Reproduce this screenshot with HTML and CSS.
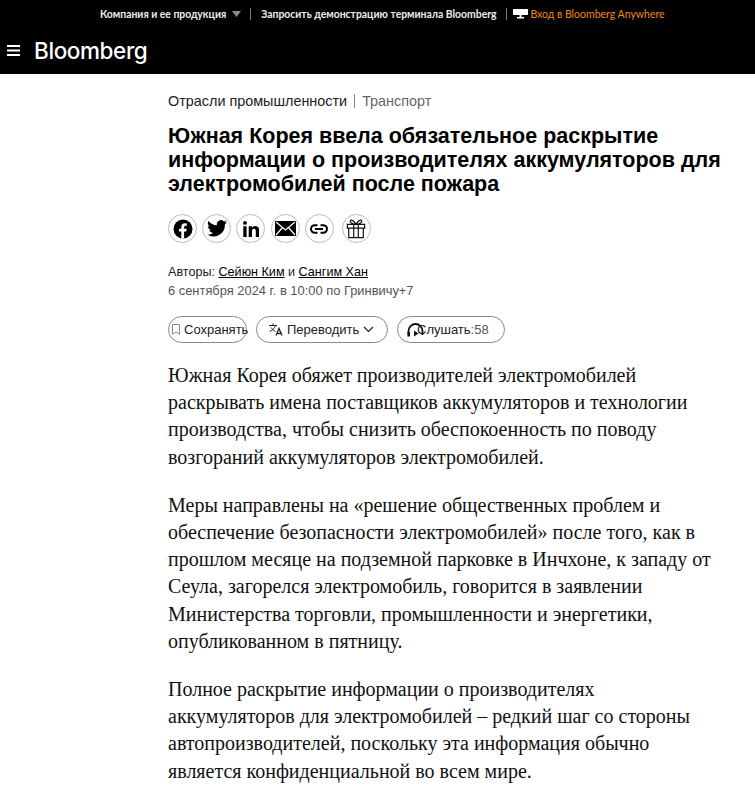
FILE: index.html
```html
<!DOCTYPE html>
<html lang="ru">
<head>
<meta charset="utf-8">
<title>Bloomberg</title>
<link rel="stylesheet" href="styles.css">
</head>
<body>
<header class="site-header">
  <div class="topbar">
    <span class="top-link">Компания и ее продукция</span>
    <svg class="caret" width="9" height="6" viewBox="0 0 9 6"><path d="M0 0h9L4.500 6z" fill="#8a8a8a"/></svg>
    <span class="sep sep-a"></span>
    <span class="top-link">Запросить демонстрацию терминала Bloomberg</span>
    <span class="sep sep-b"></span>
    <svg class="monitor" width="15" height="10" viewBox="0 0 15 10"><path d="M0 0h15v6H0z" fill="#fff"/><path d="M6.500 6h2v2h-2zM4 8h7v1.500H4z" fill="#fff"/></svg>
    <span class="top-link orange">Вход в Bloomberg Anywhere</span>
  </div>
  <div class="brandbar">
    <svg class="burger" width="13" height="11" viewBox="0 0 13 11"><path d="M0 0h13v2H0zM0 4.500h13v2H0zM0 9h13v2H0z" fill="#fff"/></svg>
    <span class="logo">Bloomberg</span>
  </div>
</header>
<main class="article">
  <div class="crumbs"><span>Отрасли промышленности</span><span class="bar"></span><span class="crumb-muted">Транспорт</span></div>
  <h1 class="headline">Южная Корея ввела обязательное раскрытие информации о производителях аккумуляторов для электромобилей после пожара</h1>
  <div class="share">
    <span class="share-btn"><svg width="20" height="20" viewBox="0 0 20 20"><circle cx="10" cy="10" r="9.500" fill="#000"/><path d="M8.300 19.500v-7H6v-2.700h2.300V7.800c0-2.300 1.400-3.600 3.500-3.600l2 .2v2.300h-1.200c-1.100 0-1.500.7-1.500 1.400v1.700h2.600l-.4 2.700h-2.200v7z" fill="#fff"/></svg></span>
    <span class="share-btn"><svg width="20" height="17" viewBox="0 0 24 20"><path d="M24 2.400c-.9.400-1.800.7-2.800.8 1-.6 1.800-1.600 2.200-2.700-1 .6-2 1-3.100 1.200A4.900 4.900 0 0 0 11.900 6.200C7.800 6 4.200 4 1.700.9c-1.300 2.200-.7 5.100 1.500 6.600-.8 0-1.600-.2-2.200-.6 0 2.300 1.600 4.400 3.900 4.900-.7.200-1.500.2-2.200.1.600 2 2.400 3.400 4.600 3.400A9.900 9.900 0 0 1 0 17.300 13.900 13.900 0 0 0 21.500 5c1-.7 1.900-1.600 2.500-2.600z" fill="#000"/></svg></span>
    <span class="share-btn"><svg width="16" height="16" viewBox="0 0 16 16"><path d="M.3 5.200h3.300V16H.3zM2 0a1.900 1.900 0 1 1 0 3.800A1.900 1.900 0 0 1 2 0zM5.700 5.200h3.200v1.500c.5-.9 1.600-1.800 3.200-1.800 3.400 0 4 2.200 4 5.100V16h-3.300v-5.300c0-1.300 0-2.900-1.800-2.900s-2 1.400-2 2.800V16H5.700z" fill="#000"/></svg></span>
    <span class="share-btn"><svg width="21" height="15" viewBox="0 0 21 15"><path d="M0 0h21v15H0z" fill="#000"/><path d="M1 1l9.500 8L20 1M1 14l6.500-7.500M20 14l-6.500-7.500" fill="none" stroke="#fff" stroke-width="1.200"/></svg></span>
    <span class="share-btn"><svg width="18" height="10" viewBox="0 0 18 10"><path d="M7.500 1.200H4.800a3.800 3.800 0 0 0 0 7.600h2.700M10.500 1.200h2.700a3.800 3.800 0 0 1 0 7.600h-2.700M5 5h8" fill="none" stroke="#000" stroke-width="2"/></svg></span>
    <span class="share-btn share-gift"><svg width="20" height="21" viewBox="0 0 22 22"><path d="M1.500 6.500h19v4h-19zM3 10.500h16V21H3zM8.500 6.500V21M13.500 6.500V21M11 6.500C9 3 6 .5 4.800 2.300 3.700 4 7 6.500 11 6.500c4 0 7.300-2.500 6.200-4.200C16 .5 13 3 11 6.500z" fill="none" stroke="#111" stroke-width="1.300"/></svg></span>
  </div>
  <div class="byline">Авторы: <a class="author">Сейюн Ким</a> и <a class="author">Сангим Хан</a></div>
  <div class="dateline">6 сентября 2024 г. в 10:00 по Гринвичу+7</div>
  <div class="actions">
    <span class="pill pill-save">
      <svg class="save-icon" width="8" height="11" viewBox="0 0 8 11"><path d="M.5.500h7v9.800L4 7.800.5 10.300z" fill="none" stroke="#888"/></svg>
      <span>Сохранять</span>
    </span>
    <span class="pill pill-translate">
      <svg class="pill-icon" width="14" height="13" viewBox="0 0 14 13"><path d="M0 2.500h8M4 .5v2M6.500 2.500C5.500 5.500 3 7.500.5 8.500M2 4.500c1 1.500 2.500 3 4.500 4" fill="none" stroke="#222" stroke-width="1"/><path d="M7 12.500L10 5.500l3 7M8 10.500h4" fill="none" stroke="#222" stroke-width="1.300"/></svg>
      <span>Переводить</span>
      <svg class="pill-icon" width="11" height="7" viewBox="0 0 11 7"><path d="M1 1l4.500 4.500L10 1" fill="none" stroke="#222" stroke-width="1.200"/></svg>
    </span>
    <span class="pill pill-listen">
      <svg class="pill-icon" width="17" height="14" viewBox="0 0 17 14"><path d="M1.500 12V8a7 7 0 0 1 14 0v4" fill="none" stroke="#111" stroke-width="1.800"/><path d="M7 7.500v6l4.500-3z" fill="#111"/><path d="M.5 9h2.500v4.500H.5z" fill="#111"/></svg>
      <span class="listen-text">Слушать</span>
      <span class="listen-time">:58</span>
    </span>
  </div>
  <div class="body">
    <p>Южная Корея обяжет производителей электромобилей раскрывать имена поставщиков аккумуляторов и технологии производства, чтобы снизить обеспокоенность по поводу возгораний аккумуляторов электромобилей.</p>
    <p>Меры направлены на «решение общественных проблем и обеспечение безопасности электромобилей» после того, как в прошлом месяце на подземной парковке в Инчхоне, к западу от Сеула, загорелся электромобиль, говорится в заявлении Министерства торговли, промышленности и энергетики, опубликованном в пятницу.</p>
    <p>Полное раскрытие информации о производителях аккумуляторов для электромобилей – редкий шаг со стороны автопроизводителей, поскольку эта информация обычно является конфиденциальной во всем мире.</p>
  </div>
</main>
</body>
</html>
```

FILE: styles.css
```css
* { box-sizing: border-box; }
html, body { margin: 0; padding: 0; }
body { background: #fff; color: #000; font-family: "Liberation Sans", Arial, sans-serif; overflow: hidden; height: 800px; }
.site-header { background: #000; height: 74px; color: #fff; }
.topbar { height: 27px; padding-left: 100px; display: flex; align-items: center; font-family: Lato, "Noto Sans", sans-serif; font-size: 10.400px; font-weight: 700; white-space: nowrap; }
.top-link { color: #eee; }
.orange { color: #f08a12; margin-left: 3px; font-size: 10.500px; font-weight: 400; }
.caret { margin-left: 6px; }
.sep { width: 1px; height: 12px; background: #777; }
.sep-a { margin: 0 10px 0 9px; }
.sep-b { margin: 0 6px 0 9px; }
.brandbar { height: 47px; display: flex; align-items: center; padding-left: 7px; }
.burger { margin-right: 14px; }
.logo { font-family: Inter, sans-serif; font-size: 22.500px; font-weight: 500; letter-spacing: -0.4px; color: #fff; }
.article { padding: 18px 0 0 168px; width: 730px; }
.crumbs { font-size: 14.400px; line-height: 18px; display: flex; align-items: center; color: #222; }
.bar { width: 1px; height: 14px; background: #888; margin: 0 7px; }
.crumb-muted { color: #666; }
.headline { font-size: 21.500px; line-height: 24px; font-weight: 700; margin: 14px 0 0; width: 560px; color: #000; }
.share { display: flex; gap: 5.200px; margin-top: 18px; }
.share-btn { width: 29px; height: 29px; border-radius: 50%; border: 1px solid #bbb; display: flex; align-items: center; justify-content: center; }
.share-gift { margin-left: 3px; }
.byline { font-size: 12.600px; line-height: 16px; margin-top: 21px; color: #222; }
.author { color: #000; text-decoration: underline; }
.dateline { font-size: 12.900px; line-height: 16px; margin-top: 3px; color: #555; }
.actions { display: flex; gap: 9px; margin-top: 17px; }
.pill { height: 27px; border: 1px solid #888; border-radius: 14px; display: flex; align-items: center; font-size: 13px; color: #222; white-space: nowrap; }
.pill-icon, .save-icon { flex-shrink: 0; }
.pill-save { width: 79px; padding-left: 3px; gap: 4px; }
.pill-translate { width: 132px; padding-left: 12px; gap: 4px; }
.pill-listen { width: 108px; padding-left: 9px; color: #222; }
.listen-text { margin-left: -7px; }
.listen-time { color: #555; }
.body { margin-top: 19px; width: 555px; font-family: "Liberation Serif", "Times New Roman", serif; font-size: 20px; line-height: 27.200px; color: #111; }
.body p { margin: 0 0 21px; }
```
